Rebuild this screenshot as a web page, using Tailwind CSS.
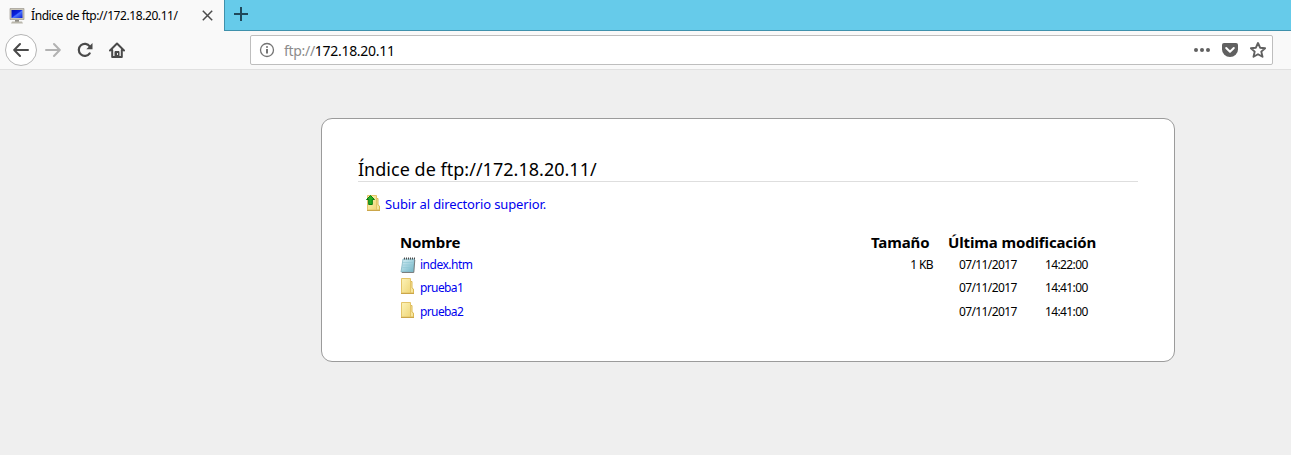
<!DOCTYPE html>
<html lang="es">
<head>
<meta charset="utf-8">
<title>Índice de ftp://172.18.20.11/</title>
<script src="https://cdn.jsdelivr.net/npm/@tailwindcss/browser@4"></script>
</head>
<body class="h-[455px] overflow-hidden bg-[#efefef] font-['Noto_Sans',sans-serif] text-black">
<svg class="absolute size-0">
  <defs>
    <linearGradient id="fold" x1="0" y1="0" x2="1" y2="1"><stop stop-color="#fcf3b8"/><stop offset="1" stop-color="#efd678"/></linearGradient>
    <linearGradient id="note" x1="0" y1="0" x2="1" y2="1"><stop stop-color="#d9f0f6"/><stop offset=".5" stop-color="#a3d2de"/><stop offset="1" stop-color="#6fb3c4"/></linearGradient>
    <linearGradient id="screen" x1="0" y1="0" x2="1" y2="1"><stop stop-color="#0414b0"/><stop offset=".45" stop-color="#0a22e0"/><stop offset=".55" stop-color="#4a74ff"/><stop offset="1" stop-color="#0a1ed0"/></linearGradient>
    <symbol id="folder" viewBox="0 0 16 16">
      <path d="M10 3.500h2v6.500l1.500 1v4h-3.500z" fill="#f7e69c" stroke="#dcb954"/>
      <path d="M1.500.5h9v14.500h-9z" fill="url(#fold)" stroke="#e3c468"/>
      <path d="M1 15.500h13" stroke="#cba64a"/>
    </symbol>
  </defs>
</svg>
<header>
  <div class="flex h-[31px] bg-[#66cbea]">
    <div class="flex w-56 items-center bg-[#f9f9f9] pl-[9px]">
      <svg class="size-4" viewBox="0 0 16 16"><path d="M1 .5h14v11H1z" fill="#c9c5b6" stroke="#9d9a90" stroke-width=".7"/><path d="M2.500 2h11v8h-11z" fill="url(#screen)"/><path d="M6 12h4v2H6z" fill="#8d8b85"/><path d="M3 13.500h10l1 2H2z" fill="#bab7ac"/></svg>
      <span class="ml-[6px] w-[168px] text-[12px] leading-4 tracking-[-0.42px] whitespace-nowrap">Índice de ftp://172.18.20.11/</span>
      <svg class="ml-[3px] size-[11px] shrink-0" viewBox="0 0 11 11" fill="none" stroke="#4c4c4c" stroke-width="1.500"><path d="M.8.8l9.400 9.400M10.200.8L.8 10.200"/></svg>
    </div>
    <div class="flex flex-1 border-b border-l border-[#3f91ac] pt-[7px] pl-[8px]">
      <svg class="size-[15px]" viewBox="0 0 15 15" stroke="#20485a" stroke-width="2"><path d="M8 0v14M1 7h14"/></svg>
    </div>
  </div>
  <div class="flex h-[39px] items-center border-b border-[#e0e0e0] bg-[#f9f9f9] pl-[5px]">
    <div class="flex size-8 items-center justify-center rounded-full border border-[#b5b5b5] bg-white">
      <svg class="size-4" viewBox="0 0 16 16" fill="none" stroke="#4a4a4a" stroke-width="2" stroke-linecap="round" stroke-linejoin="round"><path d="M15 8H1.500M7 2L1.200 8L7 14"/></svg>
    </div>
    <svg class="ml-2 size-4" viewBox="0 0 16 16" fill="none" stroke="#b2b2b2" stroke-width="2" stroke-linecap="round" stroke-linejoin="round"><path d="M1 8h13.500M9 2l5.800 6L9 14"/></svg>
    <svg class="ml-4 size-4" viewBox="0 0 16 16"><path d="M12.700 11.300A6 6 0 1 1 12.800 4.500" fill="none" stroke="#4a4a4a" stroke-width="2.200" stroke-linecap="round"/><path d="M15.500 1v6.200H9.300z" fill="#4a4a4a"/></svg>
    <svg class="ml-4 size-4" viewBox="0 0 16 16" fill="none" stroke="#4a4a4a" stroke-width="2" stroke-linejoin="round" stroke-linecap="round"><path d="M1 8.500L8 1.500l7 7M3.200 8v7h9.600V8"/><path d="M6 15V9.500h4V15z" fill="#4a4a4a" stroke-width="1"/><path d="M8.500 11.500v1" stroke="#f9f9f9" stroke-width="1"/></svg>
    <div class="ml-[125px] flex h-[30px] w-[1023px] items-center rounded-[2px] border border-[#bebebe] bg-white pl-2">
      <svg class="size-4" viewBox="0 0 16 16" fill="none" stroke="#747474"><circle cx="8" cy="8" r="6.500" stroke-width="1.300"/><path d="M8 7v4.500M8 4.200v1.600" stroke-width="2"/></svg>
      <span class="ml-[9px] pt-px text-[14px] leading-5 tracking-[-0.3px] whitespace-nowrap"><span class="text-[#8c8c8c]">ftp://</span>172.18.20.11</span>
      <svg class="ml-auto size-4" viewBox="0 0 16 16" fill="#606060"><circle cx="2" cy="8" r="2"/><circle cx="8" cy="8" r="2"/><circle cx="14" cy="8" r="2"/></svg>
      <svg class="ml-3 size-4" viewBox="0 0 16 16"><path d="M2 1h12q2 0 2 2v4.500a8 7.500 0 0 1-16 0V3q0-2 2-2z" fill="#606060"/><path d="M4.200 6L8 9.700L11.800 6" fill="none" stroke="#fff" stroke-width="2" stroke-linecap="round" stroke-linejoin="round"/></svg>
      <svg class="mr-[6px] ml-3 size-4" viewBox="0 0 16 16" fill="none" stroke="#606060" stroke-width="1.900" stroke-linejoin="round"><path d="M8 1l2.100 4.700 5 .5-3.800 3.400 1.200 5.200L8 12.200l-4.500 2.600 1.200-5.200L.9 6.200l5-.5z"/></svg>
    </div>
  </div>
</header>
<main class="mt-12 ml-[321px] h-[244px] w-[854px] rounded-[11px] border border-[#9b9b9b] bg-white px-9 pt-[38px]">
  <h1 class="h-[25px] border-b border-[#dedede] text-[18px] leading-[25px] tracking-[0.02px] whitespace-nowrap">Índice de ftp://172.18.20.11/</h1>
  <p class="mt-[13px] ml-2 flex h-5 text-[13px] leading-[19px] text-[#0000ee]">
    <svg class="size-4" viewBox="0 0 16 16"><use href="#folder"/><path d="M4.500 .5L.5 4.500H2.700V9.500h3.600V4.500h2.200z" fill="#27ae22" stroke="#087b10" stroke-linejoin="round"/></svg>
    <a class="ml-[3px] tracking-[-0.13px] whitespace-nowrap">Subir al directorio superior.</a>
  </p>
  <div class="mt-[16px] ml-[42px] grid w-[720px] grid-cols-[471px_77px_97px_75px] text-[12px] tracking-[-0.62px] whitespace-nowrap">
    <b class="h-[23px] text-[15px] leading-[22px] tracking-[-0.13px]">Nombre</b><b class="text-[15px] leading-[22px] tracking-[-0.13px]">Tamaño</b><b class="col-span-2 text-[15px] leading-[22px] tracking-[-0.13px]">Última modificación</b>
    <div class="flex h-[23px] text-[#0000ee]"><svg class="mt-[3px] size-4" viewBox="0 0 16 16"><path d="M3 2h11.500l-1 13H1z" fill="url(#note)" stroke="#7fb4c2" stroke-width=".8"/><path d="M3 5.500h10M2.700 8h10M2.500 10.500h10" stroke="#8fc6d4" stroke-width=".6"/><path d="M14.800 3l-1 12.500H2" fill="none" stroke="#666" stroke-width=".8"/><path d="M4.500.5v2M6.500.5v2M8.500.5v2M10.500.5v2M12.500.5v2M14.500.5v2" stroke="#4a4a4a"/></svg><a class="ml-1 leading-[22px] tracking-[-0.5px]">index.htm</a></div>
    <span class="pr-[15px] text-right leading-[22px]">1 KB</span><span class="pl-[11px] leading-[22px]">07/11/2017</span><span class="leading-[22px]">14:22:00</span>
    <div class="flex h-6 text-[#0000ee]"><svg class="mt-px size-4"><use href="#folder"/></svg><a class="ml-1 leading-[22px]">prueba1</a></div>
    <span></span><span class="pl-[11px] leading-[22px]">07/11/2017</span><span class="leading-[22px]">14:41:00</span>
    <div class="flex h-6 text-[#0000ee]"><svg class="mt-px size-4"><use href="#folder"/></svg><a class="ml-1 leading-[22px]">prueba2</a></div>
    <span></span><span class="pl-[11px] leading-[22px]">07/11/2017</span><span class="leading-[22px]">14:41:00</span>
  </div>
</main>
</body>
</html>
